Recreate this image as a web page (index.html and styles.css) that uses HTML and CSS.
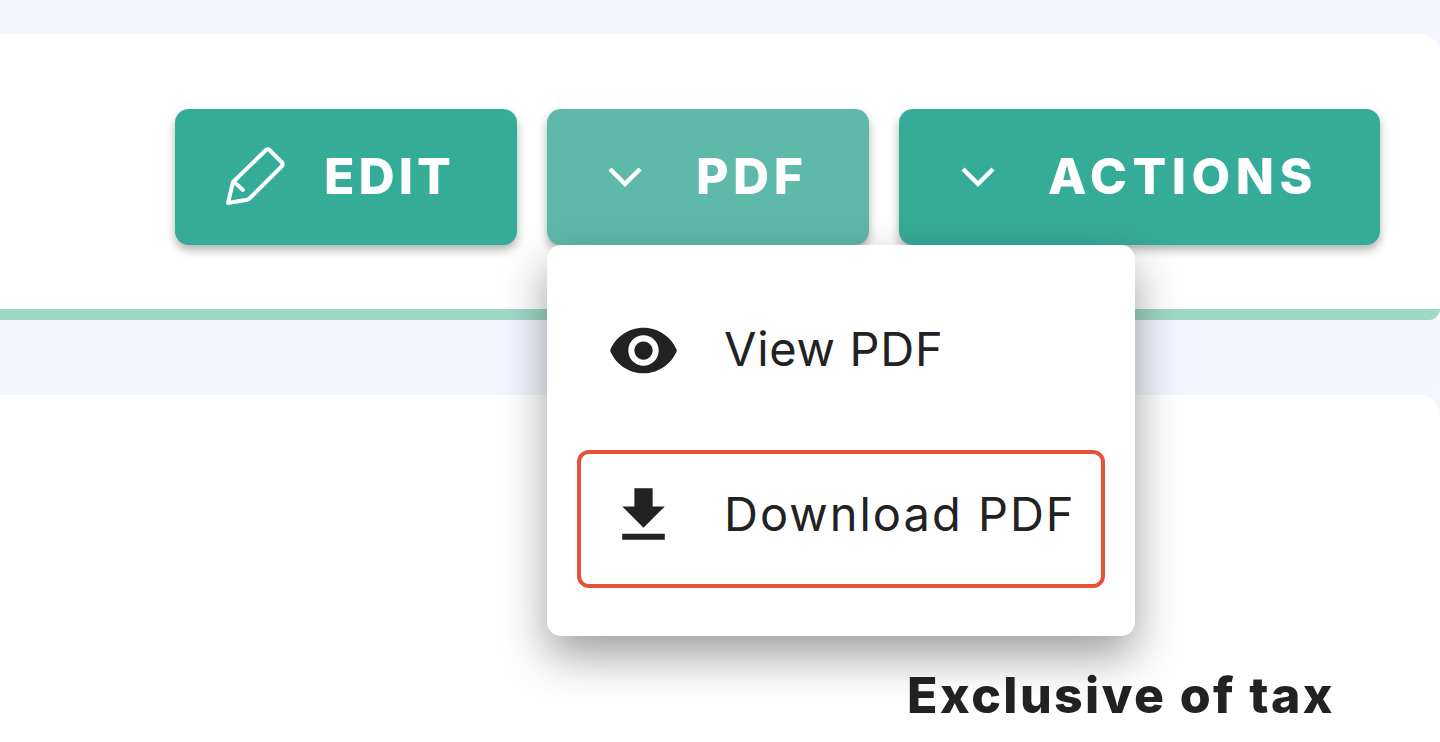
FILE: index.html
```html
<!DOCTYPE html>
<html lang="en">
<head>
  <meta charset="UTF-8">
  <meta name="viewport" content="width=device-width, initial-scale=1">
  <title>Invoice</title>
  <link rel="stylesheet" href="styles.css">
</head>
<body>

  <div class="card barra">
    <div class="botoes">
      <button class="botao botao-edit">
        <svg class="icone-lapis" viewBox="0 0 60 60" width="60" height="60" fill="none" stroke="#fff" stroke-width="4" stroke-linejoin="round" stroke-linecap="round">
          <path d="M3 56 8 35 41 3c1-1 2.500-1 3.500 0L57 15.500c1 1 1 2.500 0 3.500L25 51c-1 1-2 1.500-3 1.700Z"/>
          <path d="M9 35l9 8"/>
        </svg>
        <span>EDIT</span>
      </button>

      <div class="menu-pdf">
        <button class="botao botao-pdf">
          <svg class="icone-seta" viewBox="0 0 34 22" width="34" height="22" fill="none" stroke="#fff" stroke-width="4.400">
            <path d="M2 3l15 15L32 3"/>
          </svg>
          <span>PDF</span>
        </button>

        <div class="dropdown">
          <a class="item item-view">
            <svg viewBox="0 0 24 24" width="73" height="73" fill="#222"><path d="M12 4.500C7 4.500 2.730 7.610 1 12c1.730 4.390 6 7.500 11 7.500s9.270-3.110 11-7.500c-1.730-4.390-6-7.500-11-7.500zM12 17c-2.760 0-5-2.240-5-5s2.240-5 5-5 5 2.240 5 5-2.240 5-5 5zm0-8c-1.660 0-3 1.340-3 3s1.340 3 3 3 3-1.340 3-3-1.340-3-3-3z"/></svg>
            <span>View PDF</span>
          </a>
          <a class="item destaque">
            <svg viewBox="0 0 24 24" width="73" height="73" fill="#222"><path d="M19 9h-4V3H9v6H5l7 7 7-7zM5 18v2h14v-2H5z"/></svg>
            <span>Download PDF</span>
          </a>
        </div>
      </div>

      <button class="botao botao-actions">
        <svg class="icone-seta" viewBox="0 0 34 22" width="34" height="22" fill="none" stroke="#fff" stroke-width="4.400">
          <path d="M2 3l15 15L32 3"/>
        </svg>
        <span>ACTIONS</span>
      </button>
    </div>
    <div class="faixa"></div>
  </div>

  <div class="card conteudo">
    <p class="imposto">Exclusive of tax</p>
  </div>

</body>
</html>
```

FILE: styles.css
```css
* {
  box-sizing: border-box;
}

html, body {
  height: 100%;
}

body {
  margin: 0;
  display: flex;
  flex-direction: column;
  background: #f3f6fe;
  font-family: "Inter", "Lato", sans-serif;
  color: #222;
  overflow: hidden;
}

.card {
  background: #fff;
  border-top-right-radius: 20px;
}

.barra {
  margin-top: 34px;
  height: 286px;
  padding-top: 75px;
  display: flex;
  flex-direction: column;
  justify-content: space-between;
}

.faixa {
  height: 11px;
  background: #a0d8c8;
  border-bottom-right-radius: 12px;
}

.conteudo {
  margin-top: 75px;
  flex: 1;
  padding: 270px 105px 0 0;
}

.botoes {
  display: flex;
  justify-content: flex-end;
  gap: 30px;
  padding-right: 60px;
}

.botao {
  display: flex;
  align-items: center;
  height: 136px;
  border: 0;
  border-radius: 14px;
  background: #35ac97;
  color: #fff;
  font-family: inherit;
  font-size: 50px;
  font-weight: 800;
  letter-spacing: 4px;
  box-shadow: 0 5px 10px rgba(0, 0, 0, 0.3);
}

.botao span {
  margin-bottom: 2px;
}

.botao-edit {
  width: 342px;
  padding: 0 0 0 50px;
  gap: 39px;
}

.botao-pdf {
  width: 322px;
  padding: 0 0 0 61px;
  gap: 54px;
  background: #5eb9a8;
  letter-spacing: 4.500px;
}

.botao-actions {
  width: 481px;
  padding: 0 0 0 62px;
  gap: 53px;
  letter-spacing: 5.500px;
}

.menu-pdf {
  position: relative;
}

.dropdown {
  position: absolute;
  top: 100%;
  left: 0;
  width: 588px;
  height: 391px;
  padding: 40px 30px 0;
  display: flex;
  flex-direction: column;
  gap: 27px;
  background: #fff;
  border-radius: 14px;
  box-shadow: 0 20px 46px rgba(0, 0, 0, 0.38);
  z-index: 2;
}

.item {
  display: flex;
  align-items: center;
  gap: 44px;
  height: 138px;
  padding: 0 0 8px 26px;
  border: 4px solid transparent;
  border-radius: 12px;
  font-size: 47px;
  letter-spacing: 2px;
}

.item span {
  margin-bottom: 3px;
}

.item-view {
  letter-spacing: 0.7px;
}

.destaque {
  border-color: #e8503a;
}

.imposto {
  margin: 0;
  text-align: right;
  font-size: 50px;
  font-weight: 800;
  letter-spacing: 2.400px;
}
```
